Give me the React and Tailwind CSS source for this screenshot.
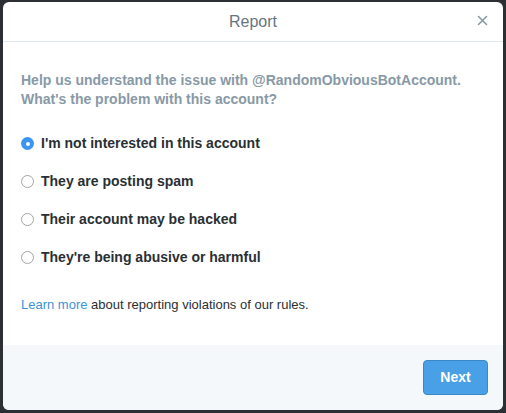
import { useState } from "react"

const options = [
    "I'm not interested in this account",
    "They are posting spam",
    "Their account may be hacked",
    "They're being abusive or harmful",
]

export default function App() {
    const [selected, setSelected] = useState(0)

    return (
        <div className="min-h-[413px] bg-[#2c3034] pt-[2px] px-[3px] font-['Liberation_Sans',Arial,sans-serif]">
            <div className="w-[500px] h-[408px] bg-white rounded-[6px] overflow-hidden flex flex-col">
                <div className="relative h-[40px] border-b border-[#e1e8ed] flex items-center justify-center">
                    <h1 className="text-[16px] text-[#66757f]">Report</h1>
                    <button className="absolute right-[15px] top-[13px] text-[#8899a6]">
                        <svg width="11" height="11" viewBox="0 0 11 11">
                            <path d="M1.5 1.5 L9.5 9.5 M9.5 1.5 L1.5 9.5" stroke="currentColor" strokeWidth="1.6" strokeLinecap="round" />
                        </svg>
                    </button>
                </div>
                <div className="flex-1 px-[18px] pt-[29px]">
                    <p className="text-[14px] leading-[19px] font-bold text-[#8899a6]">
                        Help us understand the issue with @RandomObviousBotAccount.<br />
                        What's the problem with this account?
                    </p>
                    <div className="mt-[25px] flex flex-col gap-[19px]">
                        {options.map((opt, i) => (
                            <label key={opt} className="flex items-center gap-[7px] cursor-pointer" onClick={() => setSelected(i)}>
                                {selected === i ? (
                                    <span className="w-[13px] h-[13px] rounded-full bg-[#3b94f2] flex items-center justify-center">
                                        <span className="w-[4px] h-[4px] rounded-full bg-white"></span>
                                    </span>
                                ) : (
                                    <span className="w-[13px] h-[13px] rounded-full border border-[#a4a4a4] bg-white"></span>
                                )}
                                <span className="text-[14px] leading-[19px] font-bold text-[#292f33]">{opt}</span>
                            </label>
                        ))}
                    </div>
                    <p className="mt-[29px] text-[13px] leading-[18px] text-[#292f33]">
                        <a className="text-[#3b94d9]">Learn more</a> about reporting violations of our rules.
                    </p>
                </div>
                <div className="h-[65px] bg-[#f5f8fa] flex items-start justify-end pt-[15px] pr-[15px]">
                    <button className="w-[65px] h-[35px] rounded-[4px] bg-[#4aa0e6] border border-[#3b88c9] text-white font-bold text-[14px]">
                        Next
                    </button>
                </div>
            </div>
        </div>
    )
}
